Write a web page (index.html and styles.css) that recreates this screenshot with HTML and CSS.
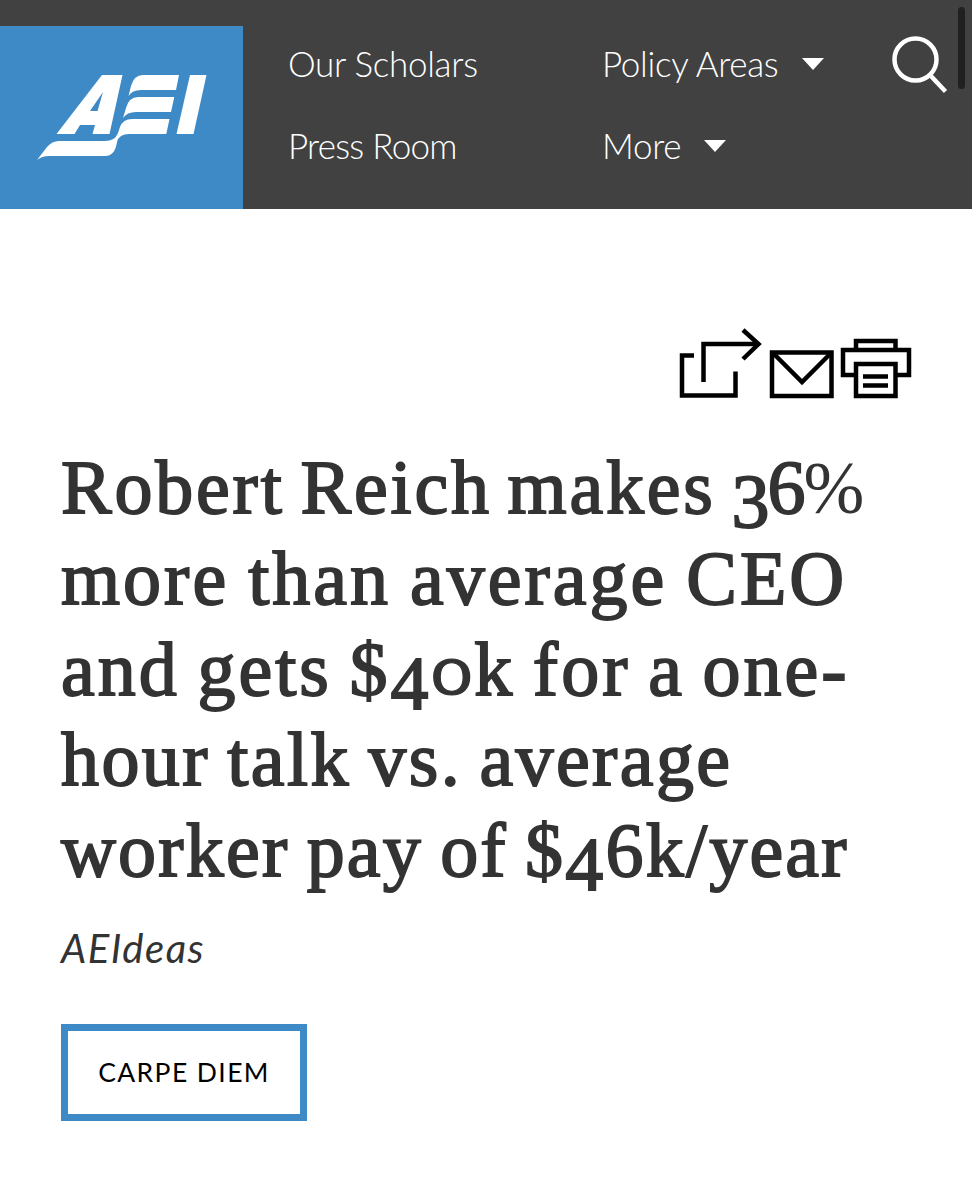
FILE: index.html
```html
<!DOCTYPE html>
<html lang="en">

<head>
    <meta charset="UTF-8">
    <meta name="viewport" content="width=device-width, initial-scale=1.0">
    <title>AEI</title>
    <link rel="stylesheet" href="styles.css">
</head>

<body>
    <header class="site-header">
        <a href="#" class="logo" aria-label="AEI">
            <svg viewBox="0 0 243 183" width="243" height="183" fill="#fff">
                <path fill-rule="evenodd" d="M102 49H122.5L109.5 108H92.5L95 99H80L74.500 108H56.500ZM103 66L90 85H97.500Z" />
                <path d="M179.300 49H179L176 64H141Q132 64 128.500 70L131 60Q134 49 143 49Z" />
                <path d="M174.300 71L171 86H136Q127 86 123 92L126 82Q129 71 138 71Z" />
                <path d="M169.500 93L166.300 108H129Q119 108 117 116Q115 130 105 130H49Q42 130 37 134L47 121Q52 115 59 115H105Q115 115 118 107L120 101Q123 93 132 93Z" />
                <path d="M190 49H206.500L193.500 108H176.500Z" />
            </svg>
        </a>
        <nav class="main-nav">
            <a href="#" class="scholars">Our Scholars</a>
            <a href="#" class="policy">Policy Areas <i class="caret"></i></a>
            <a href="#" class="press">Press Room</a>
            <a href="#" class="more">More <i class="caret"></i></a>
        </nav>
        <a href="#" class="search" aria-label="Search">
            <svg viewBox="0 0 58 60" width="58" height="60" fill="none" stroke="#fff" stroke-width="4.500">
                <circle cx="24.500" cy="24.500" r="21" />
                <path d="M39 40L54.500 56.500" />
            </svg>
        </a>
        <div class="scroll-thumb"></div>
    </header>

    <main class="article">
        <div class="share">
            <svg viewBox="0 0 84 74" width="84" height="74">
                <path d="M18 27.500H6V67.500H59.500V43.500" />
                <path d="M27.500 54V16H82" />
                <path d="M67 2L82.500 16L67 31" />
            </svg>
            <svg class="mail" viewBox="0 0 64 49" width="64" height="49">
                <path d="M2 2.500H61.500V46H2Z" />
                <path d="M3 3L32 32L61 3" />
            </svg>
            <svg class="print" viewBox="0 0 72 60" width="72" height="60">
                <path d="M16 12V3H55.500V12" />
                <path d="M16 37H3V12H69V37H55.500" />
                <path d="M16 26H55.500V58H16Z" />
                <path d="M23 38.500H48M23 47.500H48" />
            </svg>
        </div>

        <h1>
            <span class="line l1">Robert Reich makes <span class="percent"><span class="low">3</span>6<span class="sign">%</span></span></span>
            <span class="line l2">more than average CEO</span>
            <span class="line l3">and gets $<span class="low">4</span><span class="zero">0</span>k for a one-</span>
            <span class="line l4">hour talk vs. average</span>
            <span class="line l5">worker pay of $<span class="low">4</span>6k/year</span>
        </h1>
        <p class="blog">AEIdeas</p>
        <a href="#" class="tag">CARPE DIEM</a>
    </main>
</body>

</html>
```

FILE: styles.css
```css
:root {
    --header-background: #414141;
    --brand-color: #3d8ac7;
    --text-color: #333;
}

* {
    margin: 0;
    padding: 0;
    box-sizing: border-box;
}

body {
    font-family: Lato, sans-serif;
    background-color: #fff;
    color: var(--text-color);
    min-height: 1200px;
}

a {
    color: inherit;
    text-decoration: none;
}

svg {
    display: block;
    overflow: visible;
}

.site-header {
    position: relative;
    display: flex;
    height: 209px;
    background-color: var(--header-background);
    color: #fff;
}

.logo {
    width: 243px;
    height: 183px;
    margin-top: 26px;
    background-color: var(--brand-color);
}

.main-nav {
    display: grid;
    grid-template-columns: 314px 280px;
    grid-template-rows: 82px 82px;
    margin-left: 45px;
    padding-top: 22px;
    font-size: 35px;
    font-weight: 300;
    line-height: 82px;
    letter-spacing: -0.3px;
    white-space: nowrap;
}

.main-nav a {
    height: 82px;
}

.main-nav .press {
    letter-spacing: -0.75px;
}

.caret {
    display: inline-block;
    margin-left: 14px;
    border: 11px solid transparent;
    border-top: 12px solid #fff;
    border-bottom: 0;
    vertical-align: 7px;
}

.search {
    margin: 35px 0 0 9px;
}

.scroll-thumb {
    position: absolute;
    top: 7px;
    right: 7px;
    width: 7px;
    height: 82px;
    border-radius: 4px;
    background-color: #202020;
}

.article {
    padding: 119px 61px 0;
}

.share {
    display: flex;
    align-items: flex-end;
    height: 74px;
    margin-left: 615px;
}

.share svg {
    flex: none;
    fill: none;
    stroke: #000;
    stroke-width: 4.5;
}

.share .mail {
    margin: 0 5.5px 3px 10px;
}

.share .print {
    margin-bottom: 4px;
}

h1 {
    margin-top: 40px;
    font-family: "Liberation Serif", serif;
    font-size: 76px;
    font-weight: 400;
    line-height: 90.75px;
    -webkit-text-stroke: 1.8px var(--text-color);
}

.line {
    display: block;
    white-space: nowrap;
}

.l1 {
    letter-spacing: 2.8px;
    word-spacing: -6px;
}

.l2 {
    letter-spacing: 3px;
    word-spacing: -3px;
}

.l3 {
    letter-spacing: 3px;
    word-spacing: -4.3px;
}

.l4 {
    letter-spacing: 2.4px;
    word-spacing: -4px;
}

.l5 {
    letter-spacing: 2.2px;
    word-spacing: -4px;
}

/* old-style figures */
.low {
    line-height: 0;
    vertical-align: -14px;
}

.percent {
    letter-spacing: -2px;
}

.sign {
    font-size: 73px;
    line-height: 0;
    -webkit-text-stroke-width: 0;
}

.zero {
    display: inline-block;
    margin: 0 8px 0 5px;
    font-family: Lato, sans-serif;
    font-size: 51px;
    line-height: 0;
    letter-spacing: 0;
    transform: scaleX(1.35);
    -webkit-text-stroke-width: 1px;
}

.blog {
    margin-top: 24px;
    font-size: 40px;
    font-style: italic;
    line-height: 56px;
    letter-spacing: 1.5px;
}

.tag {
    display: flex;
    align-items: center;
    justify-content: center;
    width: 246px;
    height: 97px;
    margin-top: 48px;
    border: 7px solid var(--brand-color);
    color: #000;
    font-size: 26.5px;
    letter-spacing: 1.4px;
}
```
